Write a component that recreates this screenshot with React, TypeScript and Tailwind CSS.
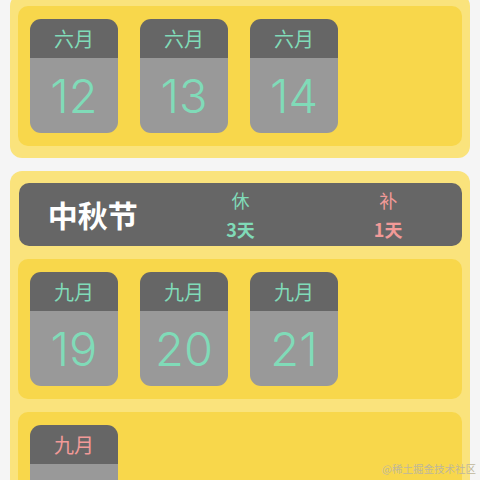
type DayType = {
  month: string;
  day: string;
  off?: boolean;
};

type HolidayType = {
  name: string;
  rest: number;
  makeup: number;
  weeks: DayType[][];
};

const cjk = "font-['PingFang_SC','Noto_Sans_CJK_SC',sans-serif]";

const DayTile = ({ month, day, off }: DayType) => {
  return (
    <div className="w-[88px] h-[114px] rounded-[11px] overflow-hidden flex flex-col shrink-0">
      <div
        className={`h-[39px] bg-[#666666] flex items-center justify-center text-[20px] ${cjk} ${
          off ? "text-[#f29a98]" : "text-[#80dbb8]"
        }`}
      >
        {month}
      </div>
      <div className="flex-1 bg-[#999999] flex items-center justify-center font-['Inter',sans-serif] font-light text-[47px] text-[#80dbb8] leading-none">
        {day}
      </div>
    </div>
  );
};

const WeekPanel = ({ days }: { days: DayType[] }) => {
  return (
    <div className="h-[140px] rounded-[10px] bg-[#f8d74b] px-3 pt-[13px] flex gap-[22px]">
      {days.map((d, i) => (
        <DayTile key={i} {...d} />
      ))}
    </div>
  );
};

const StatCol = ({ label, value, color }: { label: string; value: number; color: string }) => {
  return (
    <div className={`flex-1 flex flex-col items-center gap-[11px] ${color}`}>
      <span className={`text-[18px] leading-none ${cjk}`}>{label}</span>
      <span className={`text-[18px] leading-none font-bold ${cjk}`}>{value}天</span>
    </div>
  );
};

const HolidayCard = ({ name, rest, makeup, weeks }: HolidayType) => {
  return (
    <div className="rounded-[12px] bg-[#fae37c] px-2 py-3 flex flex-col gap-[13px]">
      <div className="h-[63px] rounded-[10px] bg-[#666666] flex items-center ml-px">
        <div className={`flex-1 text-center text-white text-[30px] font-bold ${cjk}`}>{name}</div>
        <StatCol label="休" value={rest} color="text-[#80dbb8]" />
        <StatCol label="补" value={makeup} color="text-[#f29a98]" />
      </div>
      {weeks.map((w, i) => (
        <WeekPanel key={i} days={w} />
      ))}
    </div>
  );
};

const App = () => {
  return (
    <div className="w-[480px] h-[480px] overflow-hidden bg-[#f5f5f5] relative">
      <div className="px-[10px] -mt-[6px] flex flex-col gap-[13px]">
        <div className="rounded-[12px] bg-[#fae37c] px-2 pb-3 pt-3">
          <WeekPanel
            days={[
              { month: "六月", day: "12" },
              { month: "六月", day: "13" },
              { month: "六月", day: "14" },
            ]}
          />
        </div>
        <HolidayCard
          name="中秋节"
          rest={3}
          makeup={1}
          weeks={[
            [
              { month: "九月", day: "19" },
              { month: "九月", day: "20" },
              { month: "九月", day: "21" },
            ],
            [{ month: "九月", day: "", off: true }],
          ]}
        />
      </div>
      <span className={`absolute right-[4px] bottom-[3px] text-[10.5px] text-[#bfb79c] ${cjk}`}>
        @稀土掘金技术社区
      </span>
    </div>
  );
};

export default App;
